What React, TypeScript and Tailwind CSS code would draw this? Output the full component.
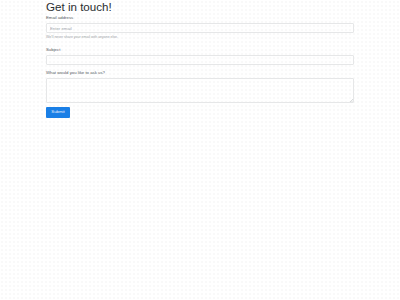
import { useState } from 'react';

const fieldClass =
  'block w-full rounded-[1px] border-[0.5px] border-[#e6e7e8] bg-transparent px-[3px] text-[4.3px] text-[#495057] placeholder:text-[#a0a5aa] focus:outline-none';

export default function App() {
  const [email, setEmail] = useState('');
  const [subject, setSubject] = useState('');
  const [question, setQuestion] = useState('');

  return (
    <div className="min-h-screen w-full bg-white bg-[radial-gradient(#f9f9f9_0.8px,transparent_0.8px)] bg-[length:4px_4px] font-['Liberation_Sans',Arial,sans-serif] text-[#212529]">
      <div className="mx-auto w-[308px]">
        <h1 className="h-[14px] text-[11.6px] leading-[14px] font-normal text-[#2a2d30]">Get in touch!</h1>
        <form onSubmit={(event) => event.preventDefault()}>
          <div className="mt-[1px]">
            <label className="block h-[6px] text-[4.3px] leading-[6px] text-[#55595d]">Email address</label>
            <input
              type="email"
              value={email}
              onChange={(event) => setEmail(event.target.value)}
              placeholder="Enter email"
              className={`${fieldClass} mt-[2px] h-[10px]`}
            />
            <small className="mt-[2px] block h-[5px] text-[3.5px] leading-[5px] text-[#9aa0a5]">
              We'll never share your email with anyone else.
            </small>
          </div>
          <div className="mt-[7px]">
            <label className="block h-[6px] text-[4.3px] leading-[6px] text-[#55595d]">Subject</label>
            <input
              type="text"
              value={subject}
              onChange={(event) => setSubject(event.target.value)}
              className={`${fieldClass} mt-[2px] h-[10px]`}
            />
          </div>
          <div className="mt-[5px]">
            <label className="block h-[6px] text-[4.3px] leading-[6px] text-[#55595d]">
              What would you like to ask us?
            </label>
            <div className="relative mt-[2px]">
              <textarea
                value={question}
                onChange={(event) => setQuestion(event.target.value)}
                className={`${fieldClass} h-[25px] resize-none py-[2px]`}
              />
              <svg
                className="pointer-events-none absolute right-[1px] bottom-[1px] h-[3px] w-[3px]"
                viewBox="0 0 3 3"
              >
                <path d="M3 0L0 3M3 1.5L1.5 3" stroke="#b5b8bb" strokeWidth="0.5" />
              </svg>
            </div>
          </div>
          <button
            type="submit"
            className="mt-[4px] flex h-[11px] w-[24px] items-center justify-center rounded-[1px] bg-[#1a7fe6] text-[4.3px] text-[#e8f2ff]"
          >
            Submit
          </button>
        </form>
      </div>
    </div>
  );
}
